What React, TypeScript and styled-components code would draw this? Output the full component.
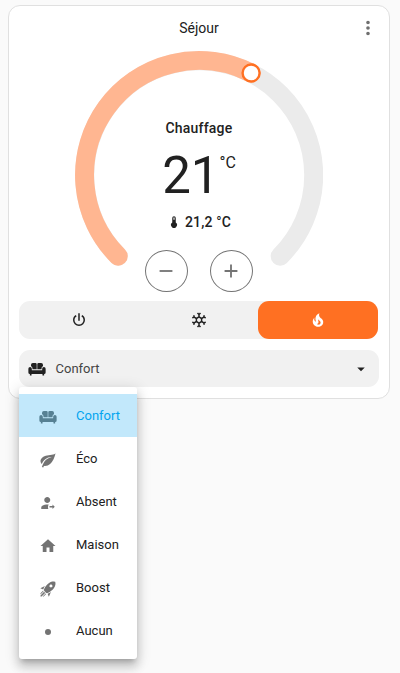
import React from "react";
import styled, { createGlobalStyle } from "styled-components";

const GlobalStyle = createGlobalStyle`
  *, *::before, *::after { box-sizing: border-box; }
  html, body { margin: 0; height: 100%; overflow: hidden; }
  body {
    background: #fafafa;
    color: #212121;
    font-family: Roboto, sans-serif;
    font-size: 14px;
  }
  button { font: inherit; color: inherit; border: 0; padding: 0; background: none; }
`;

const icons = {
  dots:
    "M12,16A2,2 0 0,1 14,18A2,2 0 0,1 12,20A2,2 0 0,1 10,18A2,2 0 0,1 12,16M12,10A2,2 0 0,1 14,12A2,2 0 0,1 12,14A2,2 0 0,1 10,12A2,2 0 0,1 12,10M12,4A2,2 0 0,1 14,6A2,2 0 0,1 12,8A2,2 0 0,1 10,6A2,2 0 0,1 12,4Z",
  minus: "M19,13H5V11H19V13Z",
  plus: "M19,13H13V19H11V13H5V11H11V5H13V11H19V13Z",
  thermometer:
    "M15 13V5A3 3 0 0 0 9 5V13A5 5 0 1 0 15 13M12 4A1 1 0 0 1 13 5V8H11V5A1 1 0 0 1 12 4Z",
  power:
    "M16.56,5.44L15.11,6.89C16.84,7.94 18,9.83 18,12A6,6 0 0,1 12,18A6,6 0 0,1 6,12C6,9.83 7.16,7.94 8.88,6.88L7.44,5.44C5.36,6.88 4,9.28 4,12A8,8 0 0,0 12,20A8,8 0 0,0 20,12C20,9.28 18.64,6.88 16.56,5.44M13,3H11V13H13",
  snowflake:
    "M20.79,13.95L18.46,14.57L16.46,13.44V10.56L18.46,9.43L20.79,10.05L21.31,8.12L19.54,7.65L20,5.88L18.07,5.36L17.45,7.69L15.45,8.82L13,7.38V5.12L14.71,3.41L13.29,2L12,3.29L10.71,2L9.29,3.41L11,5.12V7.38L8.5,8.82L6.5,7.69L5.92,5.36L4,5.88L4.47,7.65L2.7,8.12L3.22,10.05L5.55,9.43L7.55,10.56V13.45L5.55,14.58L3.22,13.96L2.7,15.89L4.47,16.36L4,18.12L5.93,18.64L6.55,16.31L8.55,15.18L11,16.62V18.88L9.29,20.59L10.71,22L12,20.71L13.29,22L14.7,20.59L13,18.88V16.62L15.5,15.17L17.5,16.3L18.12,18.63L20,18.12L19.53,16.35L21.3,15.88L20.79,13.95M9.5,10.56L12,9.11L14.5,10.56V13.44L12,14.89L9.5,13.44V10.56Z",
  fire:
    "M17.66 11.2C17.43 10.9 17.15 10.64 16.89 10.38C16.22 9.78 15.46 9.35 14.82 8.72C13.33 7.26 13 4.85 13.95 3C13 3.23 12.17 3.75 11.46 4.32C8.87 6.4 7.85 10.07 9.07 13.22C9.11 13.32 9.15 13.42 9.15 13.55C9.15 13.77 9 13.97 8.8 14.05C8.57 14.15 8.33 14.09 8.14 13.93C8.08 13.88 8.04 13.83 8 13.76C6.87 12.33 6.69 10.28 7.45 8.64C5.78 10 4.87 12.3 5 14.47C5.06 14.97 5.12 15.47 5.29 15.97C5.43 16.57 5.7 17.17 6 17.7C7.08 19.43 8.95 20.67 10.96 20.92C13.1 21.19 15.39 20.8 17.03 19.32C18.86 17.66 19.5 15 18.56 12.72L18.43 12.46C18.22 12 17.66 11.2 17.66 11.2M14.5 17.5C14.22 17.74 13.76 18 13.4 18.1C12.28 18.5 11.16 17.94 10.5 17.28C11.69 17 12.4 16.12 12.61 15.23C12.78 14.43 12.46 13.77 12.33 13C12.21 12.26 12.23 11.63 12.5 10.94C12.69 11.32 12.89 11.7 13.13 12C13.9 13 15.11 13.44 15.37 14.8C15.41 14.94 15.43 15.08 15.43 15.23C15.46 16.05 15.1 16.95 14.5 17.5H14.5Z",
  sofa:
    "M6.6 4H9.6A1.8 1.8 0 0 1 11.6 5.8V12.4H5.9V11C5.9 9.6 5.1 8.5 4 8.2V6.5A2.5 2.5 0 0 1 6.6 4M14.4 4H17.4A2.5 2.5 0 0 1 20 6.5V8.2C18.9 8.5 18.1 9.6 18.1 11V12.4H12.4V5.8A1.8 1.8 0 0 1 14.4 4M2.8 9.2A2.3 2.3 0 0 1 5.1 11.5V13.6H18.9V11.5A2.3 2.3 0 0 1 23.5 11.5V16.7A2 2 0 0 1 21.5 18.7V20.7H19.3V18.7H4.7V20.7H2.5V18.7A2 2 0 0 1 .5 16.7V11.5A2.3 2.3 0 0 1 2.8 9.2Z",
  leaf:
    "M17,8C8,10 5.9,16.17 3.82,21.34L5.71,22L6.66,19.7C7.14,19.87 7.64,20 8,20C19,20 22,3 22,3C21,5 14,5.25 9,6.25C4,7.25 2,11.5 2,13.5C2,15.5 3.75,17.25 3.75,17.25C7,8 17,8 17,8Z",
  away:
    "M18 16H14V18H18V20L21 17L18 14V16M11 4C8.8 4 7 5.8 7 8S8.8 12 11 12 15 10.2 15 8 13.2 4 11 4M11 14C6.6 14 3 15.8 3 18V20H12.5C12.2 19.2 12 18.4 12 17.5C12 16.3 12.3 15.2 12.9 14.1C12.3 14.1 11.7 14 11 14",
  home: "M10,20V14H14V20H19V12H22L12,3L2,12H5V20H10Z",
  rocket:
    "M13.13 22.19L11.5 18.36C13.07 17.78 14.54 17 15.9 16.09L13.13 22.19M5.64 12.5L1.81 10.87L7.91 8.1C7 9.46 6.22 10.93 5.64 12.5M21.61 2.39C21.61 2.39 16.66 .269 11 5.93C8.81 8.12 7.5 10.53 6.65 12.64C6.37 13.39 6.56 14.21 7.11 14.77L9.24 16.89C9.79 17.45 10.61 17.63 11.36 17.35C13.5 16.53 15.88 15.19 18.07 13C23.73 7.34 21.61 2.39 21.61 2.39M14.54 9.46C13.76 8.68 13.76 7.41 14.54 6.63S16.59 5.85 17.37 6.63C18.14 7.41 18.15 8.68 17.37 9.46C16.59 10.24 15.32 10.24 14.54 9.46M6.24 22L9.88 18.36C9.54 18.27 9.21 18.12 8.91 17.91L4.83 22H6.24M2 22H3.41L8.18 17.24L6.76 15.83L2 20.59V22M2 19.17L6.09 15.09C5.88 14.79 5.73 14.47 5.64 14.12L2 17.76V19.17Z",
  circle: "M12,8A4,4 0 0,0 8,12A4,4 0 0,0 12,16A4,4 0 0,0 16,12A4,4 0 0,0 12,8Z",
  caret: "M7,10L12,15L17,10H7Z",
};

type IconName = keyof typeof icons;

const Glyph = styled.svg`
  display: block;
  flex: none;
  fill: currentColor;
`;

const Icon = ({ name, size = 18 }: { name: IconName; size?: number }) => (
  <Glyph width={size} height={size} viewBox="0 0 24 24" aria-hidden>
    <path d={icons[name]} />
  </Glyph>
);

const Page = styled.main`
  padding: 5px 10px 0 8px;
`;

const Card = styled.section`
  position: relative;
  height: 394px;
  padding: 0 10px;
  border: 1px solid #e0e0e0;
  border-radius: 12px;
  background: #fff;
`;

const Header = styled.header`
  display: grid;
  grid-template-columns: 24px 1fr 24px;
  align-items: center;
  height: 45px;
  padding-bottom: 2px;
  line-height: 20px;
`;

const Title = styled.h1`
  grid-column: 2;
  margin: 0;
  font-size: 14px;
  font-weight: 400;
  text-align: center;
`;

const MoreButton = styled.button`
  justify-self: end;
  color: #6f6f6f;
`;

const Dial = styled.div`
  display: grid;
  justify-content: center;
  height: 241px;
  & > * { grid-area: 1 / 1; }
`;

const Arc = styled.svg`
  display: block;
  fill: none;
  stroke-width: 19;
  stroke-linecap: round;
`;

const Readout = styled.div`
  display: flex;
  flex-direction: column;
  align-items: center;
  padding-top: 67px;
`;

const Action = styled.div`
  height: 20px;
  line-height: 20px;
  font-weight: 500;
  letter-spacing: 0.2px;
`;

const Target = styled.div`
  display: flex;
  height: 73px;
  padding-top: 8px;
  font-size: 51px;
  line-height: 60px;
`;

const Unit = styled.span`
  padding-top: 8px;
  font-size: 16px;
  line-height: 18px;
`;

const Current = styled.div`
  display: flex;
  align-items: center;
  gap: 4px;
  height: 20px;
  margin-top: 1px;
  font-weight: 500;
  letter-spacing: 0.15px;
`;

const Stepper = styled.div`
  display: flex;
  gap: 22px;
  margin-top: 18px;
`;

const StepButton = styled.button`
  display: grid;
  place-items: center;
  width: 43px;
  height: 42px;
  padding-right: 1px;
  border: 1px solid #747474;
  border-radius: 50%;
  color: #747474;
`;

const ModeBar = styled.div`
  display: grid;
  grid-template-columns: 120px 1fr 120px;
  height: 38px;
  margin: 9px 1px 0 0;
  border-radius: 11px;
  background: #f1f1f1;
`;

const ModeButton = styled.button<{ $active?: boolean }>`
  display: grid;
  place-items: center;
  border-radius: 11px;
  background: ${(p) => (p.$active ? "#ff7022" : "transparent")};
  color: ${(p) => (p.$active ? "#fff" : "#212121")};
`;

const Select = styled.button`
  display: flex;
  align-items: center;
  gap: 9px;
  width: 100%;
  height: 37px;
  margin-top: 11px;
  padding: 0 9px;
  border-radius: 11px;
  background: #f1f1f1;
`;

const SelectLabel = styled.span`
  flex: 1;
  padding-left: 0.5px;
  color: #444;
  font-size: 13px;
  text-align: left;
`;

const Menu = styled.ul`
  position: absolute;
  top: 381px;
  left: 10px;
  width: 118px;
  height: 272px;
  margin: 0;
  padding: 7px 0;
  border-radius: 3px;
  background: #fff;
  list-style: none;
  box-shadow: 0 5px 5px -3px rgba(0, 0, 0, 0.2), 0 8px 10px 1px rgba(0, 0, 0, 0.14),
    0 3px 14px 2px rgba(0, 0, 0, 0.12);
`;

const MenuItem = styled.li<{ $selected?: boolean }>`
  display: flex;
  align-items: center;
  gap: 19px;
  height: 43px;
  padding-left: 20px;
  background: ${(p) => (p.$selected ? "#c2e8fb" : "transparent")};
  color: ${(p) => (p.$selected ? "#03a4ef" : "#212121")};
  font-size: 13px;
`;

const MenuIcon = styled.span<{ $selected?: boolean }>`
  padding-top: 3px;
  color: ${(p) => (p.$selected ? "#568093" : "#737373")};
`;

const presets: { label: string; icon: IconName }[] = [
  { label: "Confort", icon: "sofa" },
  { label: "Éco", icon: "leaf" },
  { label: "Absent", icon: "away" },
  { label: "Maison", icon: "home" },
  { label: "Boost", icon: "rocket" },
  { label: "Aucun", icon: "circle" },
];

const TemperatureArc = () => (
  <Arc width="248" height="241" viewBox="-0.2 -0.2 248 241">
    <path stroke="#ebebeb" d="M43.04 204.96A114.5 114.5 0 1 1 204.96 204.96" />
    <path stroke="#ffb691" d="M43.04 204.96A114.5 114.5 0 0 1 175.8 21.8" />
    <circle cx="175.9" cy="21.8" r="8.5" fill="#fff" stroke="#ff7022" strokeWidth="2.4" />
  </Arc>
);

export default function App() {
  const selected = "Confort";
  return (
    <>
      <GlobalStyle />
      <Page>
        <Card>
          <Header>
            <Title>Séjour</Title>
            <MoreButton aria-label="Plus">
              <Icon name="dots" size={22} />
            </MoreButton>
          </Header>
          <Dial>
            <TemperatureArc />
            <Readout>
              <Action>Chauffage</Action>
              <Target>
                21<Unit>°C</Unit>
              </Target>
              <Current>
                <Icon name="thermometer" size={14} />
                21,2 °C
              </Current>
              <Stepper>
                <StepButton aria-label="Diminuer">
                  <Icon name="minus" size={22} />
                </StepButton>
                <StepButton aria-label="Augmenter">
                  <Icon name="plus" size={22} />
                </StepButton>
              </Stepper>
            </Readout>
          </Dial>
          <ModeBar>
            <ModeButton aria-label="Arrêt"><Icon name="power" /></ModeButton>
            <ModeButton aria-label="Froid"><Icon name="snowflake" /></ModeButton>
            <ModeButton aria-label="Chaud" $active><Icon name="fire" /></ModeButton>
          </ModeBar>
          <Select>
            <Icon name="sofa" />
            <SelectLabel>{selected}</SelectLabel>
            <Icon name="caret" />
          </Select>
          <Menu>
            {presets.map(({ label, icon }) => (
              <MenuItem key={label} $selected={label === selected}>
                <MenuIcon $selected={label === selected}>
                  <Icon name={icon} />
                </MenuIcon>
                {label}
              </MenuItem>
            ))}
          </Menu>
        </Card>
      </Page>
    </>
  );
}
